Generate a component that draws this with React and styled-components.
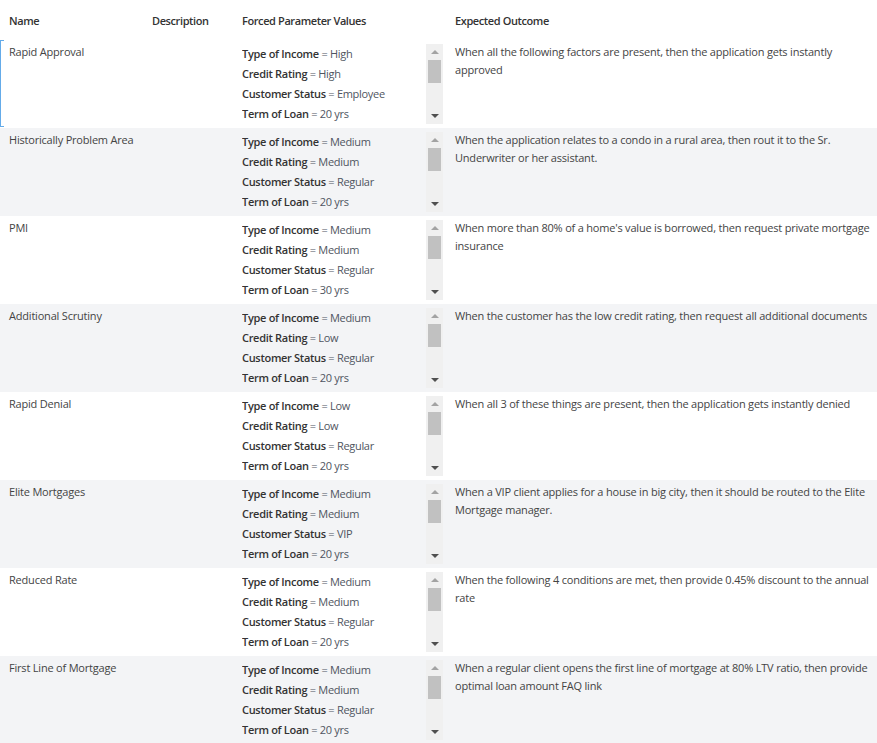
import React from 'react';
import styled, { createGlobalStyle } from 'styled-components';

const GlobalStyle = createGlobalStyle`
  html, body {
    margin: 0;
    padding: 0;
    background: #ffffff;
  }
  body {
    font-family: "Open Sans", "Noto Sans", "Liberation Sans", sans-serif;
    font-size: 11px;
    letter-spacing: -0.2px;
    color: #444;
  }
`;

const cols = '143px 90px 213px 1fr';

const Table = styled.div`
  width: 877px;
  overflow: hidden;
`;

const HeaderRow = styled.div`
  display: grid;
  grid-template-columns: ${cols};
  height: 40px;
  align-items: center;
`;

const HeaderCell = styled.div`
  padding-left: 9px;
  font-weight: 600;
  color: #333;
  font-size: 11px;
  letter-spacing: -0.4px;
  white-space: nowrap;
`;

const Row = styled.div`
  position: relative;
  display: grid;
  grid-template-columns: ${cols};
  height: 88px;
  background: ${(p) => (p.$alt ? '#f3f4f6' : '#ffffff')};
`;

const FocusEdge = styled.div`
  position: absolute;
  left: 0;
  top: 0;
  bottom: 1px;
  width: 3px;
  border: 1px solid #64abe9;
  border-right: none;
`;

const Cell = styled.div`
  padding: 3px ${(p) => (p.$wide ? '0' : '4px')} 0 9px;
  line-height: 18px;
  color: #444;
`;

const ParamCell = styled.div`
  display: flex;
  padding: 4px 3px 0 9px;
`;

const ParamList = styled.div`
  flex: 1;
  height: 80px;
  overflow: hidden;
`;

const ParamLine = styled.div`
  height: 20px;
  line-height: 20px;
  letter-spacing: -0.3px;
  white-space: nowrap;
  color: #4f5561;
  b {
    font-weight: 600;
    color: #333;
  }
`;

const ScrollTrack = styled.div`
  width: 17px;
  height: 80px;
  background: #f0f0f0;
  display: flex;
  flex-direction: column;
  align-items: center;
`;

const Arrow = styled.div`
  width: 0;
  height: 0;
  margin-top: ${(p) => (p.$down ? 'auto' : '6px')};
  margin-bottom: ${(p) => (p.$down ? '6px' : '0')};
  border-left: 4px solid transparent;
  border-right: 4px solid transparent;
  ${(p) =>
    p.$down
      ? 'border-top: 4px solid #505050;'
      : 'border-bottom: 4px solid #a3a3a3;'}
`;

const Thumb = styled.div`
  width: 13px;
  height: 23px;
  margin-top: 6px;
  background: #c1c1c1;
`;

const rows = [
  {
    name: 'Rapid Approval',
    params: ['High', 'High', 'Employee', '20 yrs'],
    outcome:
      'When all the following factors are present, then the application gets instantly approved',
  },
  {
    name: 'Historically Problem Area',
    params: ['Medium', 'Medium', 'Regular', '20 yrs'],
    outcome:
      'When the application relates to a condo in a rural area, then rout it to the Sr. Underwriter or her assistant.',
  },
  {
    name: 'PMI',
    params: ['Medium', 'Medium', 'Regular', '30 yrs'],
    outcome:
      "When more than 80% of a home's value is borrowed, then request private mortgage insurance",
  },
  {
    name: 'Additional Scrutiny',
    params: ['Medium', 'Low', 'Regular', '20 yrs'],
    outcome:
      'When the customer has the low credit rating, then request all additional documents',
  },
  {
    name: 'Rapid Denial',
    params: ['Low', 'Low', 'Regular', '20 yrs'],
    outcome:
      'When all 3 of these things are present, then the application gets instantly denied',
  },
  {
    name: 'Elite Mortgages',
    params: ['Medium', 'Medium', 'VIP', '20 yrs'],
    outcome:
      'When a VIP client applies for a house in big city, then it should be routed to the Elite Mortgage manager.',
  },
  {
    name: 'Reduced Rate',
    params: ['Medium', 'Medium', 'Regular', '20 yrs'],
    outcome:
      'When the following 4 conditions are met, then provide 0.45% discount to the annual rate',
  },
  {
    name: 'First Line of Mortgage',
    params: ['Medium', 'Medium', 'Regular', '20 yrs'],
    outcome:
      'When a regular client opens the first line of mortgage at 80% LTV ratio, then provide optimal loan amount FAQ link',
  },
];

const keys = ['Type of Income', 'Credit Rating', 'Customer Status', 'Term of Loan'];

export default function App() {
  return (
    <>
      <GlobalStyle />
      <Table>
        <HeaderRow>
          <HeaderCell>Name</HeaderCell>
          <HeaderCell>Description</HeaderCell>
          <HeaderCell>Forced Parameter Values</HeaderCell>
          <HeaderCell>Expected Outcome</HeaderCell>
        </HeaderRow>
        {rows.map((r, i) => (
          <Row key={r.name} $alt={i % 2 === 1}>
            {i === 0 && <FocusEdge />}
            <Cell>{r.name}</Cell>
            <Cell />
            <ParamCell>
              <ParamList>
                {keys.map((k, j) => (
                  <ParamLine key={k}>
                    <b>{k}</b> = {r.params[j]}
                  </ParamLine>
                ))}
              </ParamList>
              <ScrollTrack>
                <Arrow />
                <Thumb />
                <Arrow $down />
              </ScrollTrack>
            </ParamCell>
            <Cell $wide>{r.outcome}</Cell>
          </Row>
        ))}
      </Table>
    </>
  );
}
